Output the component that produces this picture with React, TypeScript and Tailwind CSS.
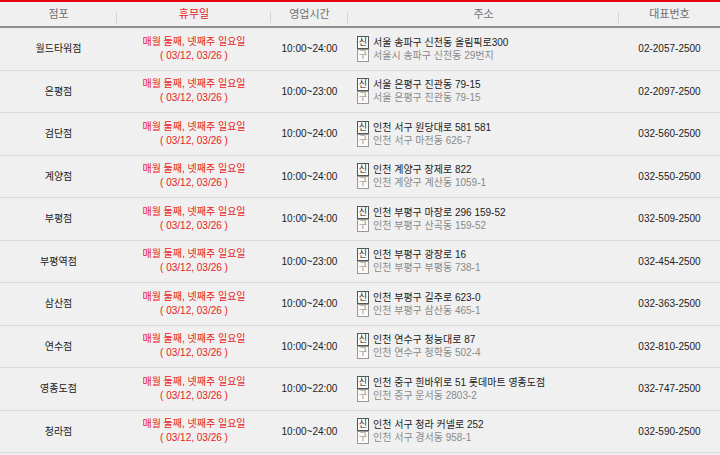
import React from 'react';

interface Store {
  name: string;
  hours: string;
  newAddr: string;
  oldAddr: string;
  phone: string;
}

const stores: Store[] = [
  { name: '월드타워점', hours: '10:00~24:00', newAddr: '서울 송파구 신천동 올림픽로300', oldAddr: '서울시 송파구 신천동 29번지', phone: '02-2057-2500' },
  { name: '은평점', hours: '10:00~23:00', newAddr: '서울 은평구 진관동 79-15', oldAddr: '서울 은평구 진관동 79-15', phone: '02-2097-2500' },
  { name: '검단점', hours: '10:00~24:00', newAddr: '인천 서구 원당대로 581 581', oldAddr: '인천 서구 마전동 626-7', phone: '032-560-2500' },
  { name: '계양점', hours: '10:00~24:00', newAddr: '인천 계양구 장제로 822', oldAddr: '인천 계양구 계산동 1059-1', phone: '032-550-2500' },
  { name: '부평점', hours: '10:00~24:00', newAddr: '인천 부평구 마장로 296 159-52', oldAddr: '인천 부평구 산곡동 159-52', phone: '032-509-2500' },
  { name: '부평역점', hours: '10:00~23:00', newAddr: '인천 부평구 광장로 16', oldAddr: '인천 부평구 부평동 738-1', phone: '032-454-2500' },
  { name: '삼산점', hours: '10:00~24:00', newAddr: '인천 부평구 길주로 623-0', oldAddr: '인천 부평구 삼산동 465-1', phone: '032-363-2500' },
  { name: '연수점', hours: '10:00~24:00', newAddr: '인천 연수구 청능대로 87', oldAddr: '인천 연수구 청학동 502-4', phone: '032-810-2500' },
  { name: '영종도점', hours: '10:00~22:00', newAddr: '인천 중구 흰바위로 51 롯데마트 영종도점', oldAddr: '인천 중구 운서동 2803-2', phone: '032-747-2500' },
  { name: '청라점', hours: '10:00~24:00', newAddr: '인천 서구 청라 커넬로 252', oldAddr: '인천 서구 경서동 958-1', phone: '032-590-2500' },
];

const cols = 'grid grid-cols-[117px_154px_77px_271px_1fr]';

function HeadCell({ label, red, last }: { label: string; red?: boolean; last?: boolean }) {
  return (
    <div className="relative flex items-center justify-center">
      <span className={red ? 'text-[#e4231c]' : 'text-[#6f6f6f]'}>{label}</span>
      {!last && <span className="absolute right-0 top-[10px] h-[11px] w-px bg-[#d4d4d4]"></span>}
    </div>
  );
}

export default function App() {
  return (
    <div
      className="w-[720px] h-[455px] overflow-hidden bg-[#f0f0f0] text-[10px] text-[#222]"
      style={{ fontFamily: '"Liberation Sans", "Noto Sans CJK KR", sans-serif' }}
    >
      <div className="h-[2px] bg-[#e60012]"></div>
      <div className={`${cols} h-[26px] border-b-2 border-[#8e8e8e] text-[11px]`}>
        <HeadCell label="점포" />
        <HeadCell label="휴무일" red />
        <HeadCell label="영업시간" />
        <HeadCell label="주소" />
        <HeadCell label="대표번호" last />
      </div>
      {stores.map((s) => (
        <div key={s.name} className={`${cols} h-[42.5px] border-b border-[#d9d9d9]`}>
          <div className="flex items-center justify-center">{s.name}</div>
          <div className="flex flex-col items-center justify-center leading-[14px] text-[#e8201a]">
            <span>매월 둘째, 넷째주 일요일</span>
            <span>( 03/12, 03/26 )</span>
          </div>
          <div className="flex items-center justify-center">{s.hours}</div>
          <div className="flex flex-col justify-center pl-[9px] leading-[13px]">
            <div className="flex items-center gap-[4px]">
              <span className="flex h-[13px] w-[12px] items-center justify-center border border-[#555] bg-[#fafafa] text-[9px] leading-none">신</span>
              <span>{s.newAddr}</span>
            </div>
            <div className="flex items-center gap-[4px]">
              <span className="flex h-[13px] w-[12px] items-center justify-center border border-[#999] bg-[#fafafa] text-[9px] leading-none text-[#888]">구</span>
              <span className="text-[#8a8a8a]">{s.oldAddr}</span>
            </div>
          </div>
          <div className="flex items-center justify-center">{s.phone}</div>
        </div>
      ))}
    </div>
  );
}
